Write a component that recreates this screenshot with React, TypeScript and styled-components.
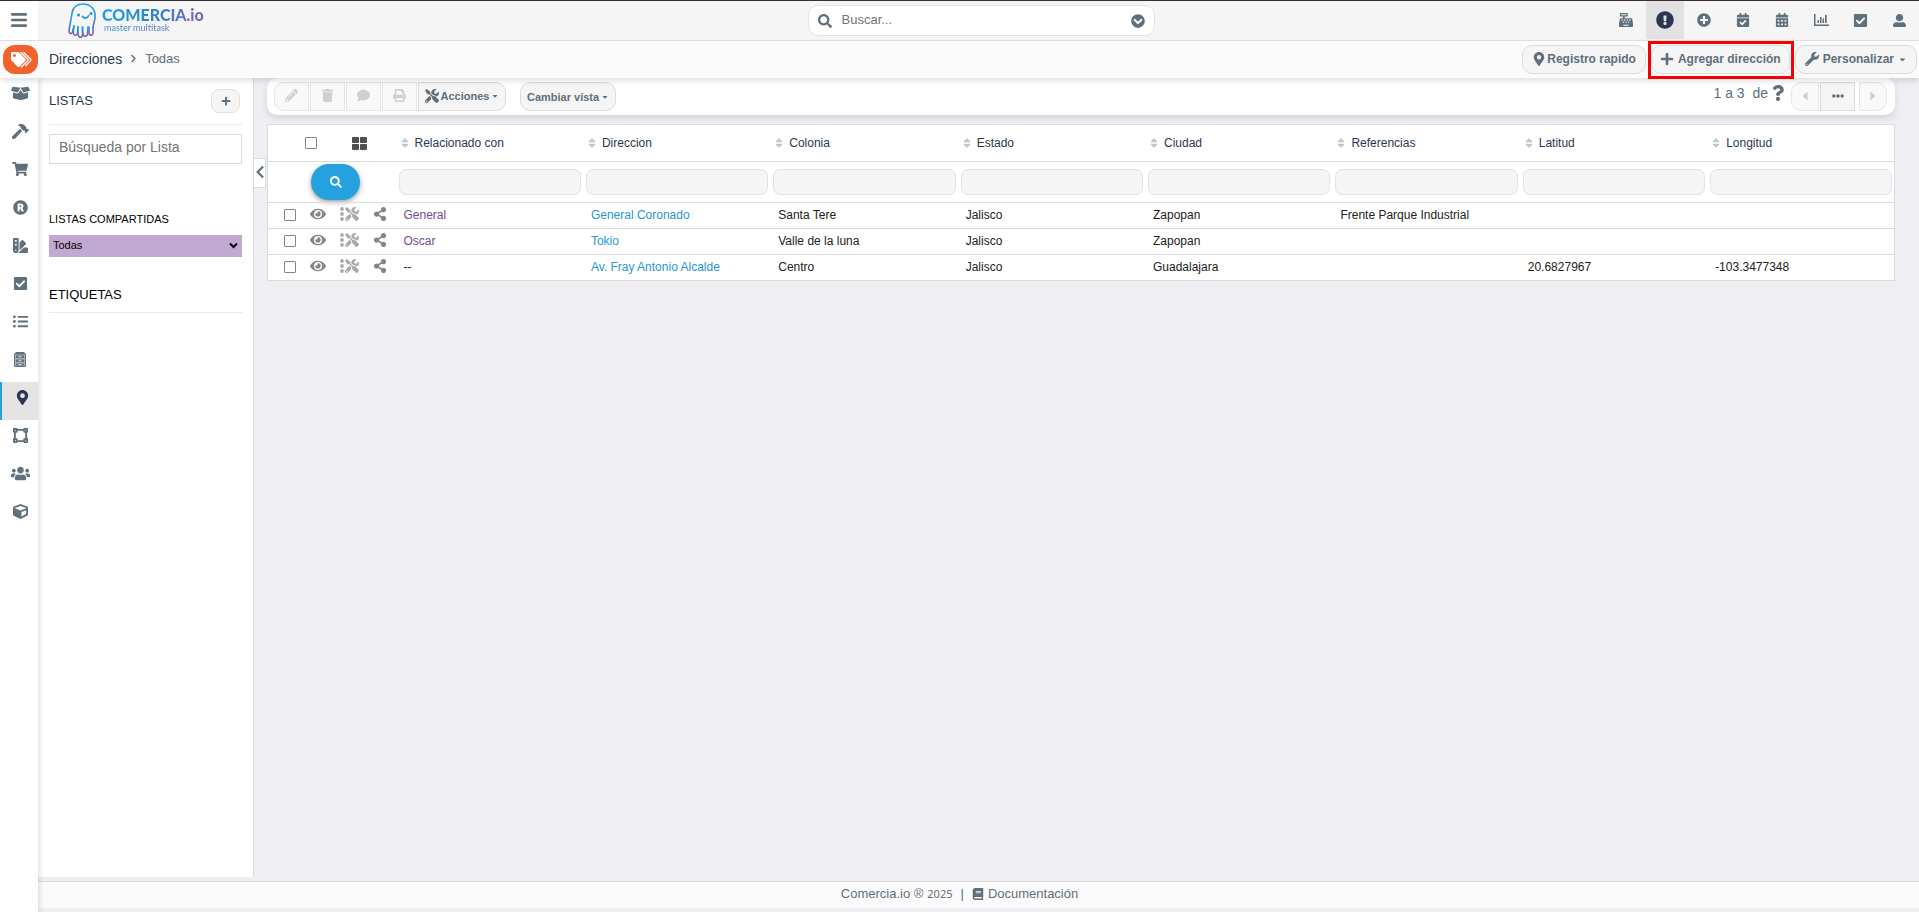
import React from "react";
import styled, { createGlobalStyle, css } from "styled-components";
import {
  FaBars,
  FaBook,
  FaBoxOpen,
  FaCalendarAlt,
  FaCalendarCheck,
  FaCaretDown,
  FaCaretLeft,
  FaCaretRight,
  FaCashRegister,
  FaCheckSquare,
  FaChevronCircleDown,
  FaChevronLeft,
  FaChevronRight,
  FaComment,
  FaCube,
  FaEllipsisH,
  FaExclamationCircle,
  FaEye,
  FaHammer,
  FaListUl,
  FaMapMarkerAlt,
  FaPencilAlt,
  FaPlus,
  FaPlusCircle,
  FaPrint,
  FaQuestion,
  FaRegistered,
  FaSearch,
  FaShareAlt,
  FaShoppingCart,
  FaSort,
  FaSwatchbook,
  FaThLarge,
  FaTools,
  FaTrash,
  FaUserAlt,
  FaUsers,
  FaVectorSquare,
  FaWrench,
} from "react-icons/fa";

const GlobalStyle = createGlobalStyle`
  *, *::before, *::after { box-sizing: border-box; }
  body {
    margin: 0;
    background: #eeeef3;
    color: #212529;
    font-family: "Liberation Sans", Arial, sans-serif;
    font-size: 13px;
    line-height: 16px;
  }
  button, input, select { font-family: inherit; }
  button { padding: 0; cursor: pointer; }
  a { text-decoration: none; color: inherit; }
  svg { flex: none; }
`;

const slate = "#5f6f7b";
const navy = "#2b3750";
const line = "#dcdcdc";

const Page = styled.div`
  display: flex;
  flex-direction: column;
  min-height: 100vh;
`;

/* ---------- top bar ---------- */

const TopBar = styled.header`
  display: flex;
  height: 41px;
  border-top: 1px solid #353036;
  border-bottom: 1px solid #e2e2e2;
  background: #f5f5f5;
`;

const MenuButton = styled.button`
  display: flex;
  align-items: center;
  justify-content: center;
  width: 38px;
  padding-bottom: 2px;
  border: 0;
  background: #fff;
  color: ${slate};
`;

const TopGrid = styled.div`
  flex: 1;
  display: grid;
  grid-template-columns: 1fr minmax(200px, 347px) 1fr;
  padding-left: 5px;
`;

const Brand = styled.a`
  display: flex;
  align-items: center;
  gap: 4px;
  padding-left: 24px;
`;

const BrandWords = styled.span`
  display: flex;
  flex-direction: column;
  padding-bottom: 2px;
`;

const BrandName = styled.span`
  font: 900 16px/16px Lato, sans-serif;
  color: transparent;
  background: linear-gradient(100deg, #1c9fdc 10%, #2d86cc 50%, #7a64b4 95%);
  background-clip: text;
`;

const BrandTag = styled.span`
  padding-left: 2px;
  font: 400 9px/10px Lato, sans-serif;
  color: transparent;
  background: linear-gradient(100deg, #3c8fce, #7a64b4);
  background-clip: text;
`;

const SearchBox = styled.label`
  display: flex;
  align-items: center;
  gap: 10px;
  height: 31px;
  margin-top: 4px;
  padding: 0 9px;
  border: 1px solid #e2e2e2;
  border-radius: 10px;
  background: #fff;
  color: ${slate};
`;

const SearchInput = styled.input`
  flex: 1;
  min-width: 0;
  border: 0;
  outline: 0;
  padding: 0 0 2px;
  background: transparent;
  font-size: 13px;
  &::placeholder { color: #757575; opacity: 1; }
`;

const TopIcons = styled.nav`
  display: flex;
  justify-content: flex-end;
  gap: 1px;
  padding-right: 1px;
`;

const TopIcon = styled.button<{ $active?: boolean }>`
  display: flex;
  align-items: center;
  justify-content: center;
  width: 38px;
  height: 38px;
  border: 0;
  background: ${(p) => (p.$active ? "#e2e2e2" : "transparent")};
  color: ${(p) => (p.$active ? navy : slate)};
`;

/* ---------- breadcrumb bar ---------- */

const CrumbBar = styled.div`
  position: relative;
  z-index: 2;
  display: flex;
  align-items: center;
  height: 37px;
  padding: 0 2px 0 3px;
  background: #fbfbfb;
  box-shadow: 0 3px 6px rgba(0, 0, 0, 0.12);
`;

const TagBadge = styled.a`
  display: flex;
  align-items: center;
  justify-content: center;
  width: 35px;
  height: 29px;
  border-radius: 12px;
  background: #f1622c;
`;

const Crumbs = styled.nav`
  flex: 1;
  display: flex;
  align-items: center;
  gap: 7px;
  padding: 0 0 2px 11px;
  color: ${slate};
`;

const CrumbLink = styled.a`
  font-size: 14px;
  color: ${navy};
`;

const CrumbActions = styled.div`
  display: flex;
  gap: 5px;
  padding-bottom: 1px;
`;

const Highlight = styled.span`
  position: relative;
  display: flex;
  &::after {
    content: "";
    position: absolute;
    inset: -4px -4px -5px -3px;
    border: 3px solid #f80000;
    pointer-events: none;
  }
`;

const Pill = styled.button<{ $pad?: number; $gap?: number; $small?: boolean }>`
  display: flex;
  align-items: center;
  justify-content: center;
  gap: ${(p) => p.$gap ?? 4}px;
  height: 29px;
  padding: 0 ${(p) => p.$pad ?? 11}px;
  border: 1px solid ${line};
  border-radius: 10px;
  background: #f5f5f5;
  color: ${slate};
  font-weight: 700;
  font-size: ${(p) => (p.$small ? 11 : 12)}px;
  white-space: nowrap;
`;

/* ---------- side navigation and lists panel ---------- */

const Body = styled.div`
  flex: 1;
  display: flex;
`;

const SideNav = styled.nav`
  position: relative;
  z-index: 1;
  width: 38px;
  flex: none;
  background: #fff;
  box-shadow: 2px 0 5px rgba(0, 0, 0, 0.12);
`;

const SideLink = styled.a<{ $active?: boolean }>`
  display: flex;
  align-items: center;
  justify-content: center;
  height: 38px;
  padding: 0 0 8px 2px;
  color: ${slate};
  ${(p) =>
    p.$active &&
    css`
      border-left: 2px solid #24a1de;
      padding-left: 5px;
      background: #e4e4e4;
      color: ${navy};
    `}
`;

const Column = styled.div`
  flex: 1;
  min-width: 0;
  display: flex;
  flex-direction: column;
`;

const Content = styled.div`
  flex: 1;
  display: flex;
`;

const ListPanel = styled.aside`
  flex: none;
  display: flex;
  flex-direction: column;
  width: 216px;
  padding: 10px 11px;
  border-right: 1px solid ${line};
  background: #fff;
`;

const PanelHead = styled.div`
  display: flex;
  align-items: center;
  justify-content: space-between;
  height: 37px;
  padding: 0 2px 10px 0;
  border-bottom: 1px solid #e9e9e9;
`;

const PanelTitle = styled.h2<{ $plain?: boolean }>`
  margin: 0;
  font-size: 13px;
  font-weight: 400;
  line-height: 16px;
  color: ${(p) => (p.$plain ? "#000" : navy)};
`;

const AddButton = styled.button`
  display: flex;
  align-items: center;
  justify-content: center;
  width: 29px;
  height: 24px;
  border: 1px solid #e0e0e0;
  border-radius: 8px;
  background: #f5f5f5;
  color: ${slate};
`;

const ListSearch = styled.input`
  height: 30px;
  margin-top: 9px;
  padding: 0 9px 4px;
  border: 1px solid ${line};
  font-size: 14px;
  &::placeholder { color: #757575; opacity: 1; }
`;

const SharedLabel = styled.label`
  margin-top: 47px;
  font-size: 11px;
  color: #000;
`;

const SelectWrap = styled.div`
  display: grid;
  align-items: center;
  margin-top: 8px;
  background: #c1a9d1;
  & > * { grid-area: 1 / 1; }
  & > svg { justify-self: end; margin: 0 4px 2px 0; pointer-events: none; color: #000; }
`;

const SharedSelect = styled.select`
  appearance: none;
  height: 22px;
  padding: 0 4px 2px;
  border: 0;
  background: transparent;
  color: #000;
  font-size: 11px;
`;

const TagsHead = styled.div`
  margin-top: 30px;
  padding-bottom: 9px;
  border-bottom: 1px solid #e9e9e9;
`;

const Gutter = styled.div`
  flex: none;
  width: 13px;
  padding-top: 80px;
`;

const CollapseButton = styled.button`
  display: flex;
  align-items: center;
  justify-content: center;
  width: 12px;
  height: 30px;
  padding-bottom: 2px;
  border: 1px solid ${line};
  border-left: 0;
  background: #fff;
  color: ${slate};
`;

/* ---------- main area ---------- */

const Main = styled.main`
  flex: 1;
  min-width: 0;
  padding-right: 24px;
`;

const Toolbar = styled.div`
  display: flex;
  justify-content: space-between;
  height: 37px;
  padding: 4px 8px 4px 7px;
  border-radius: 10px;
  background: #fff;
  box-shadow: 0 3px 6px rgba(60, 60, 90, 0.16);
`;

const Tools = styled.div`
  display: flex;
  gap: 1px;
`;

const ToolButton = styled.button<{ $end?: "left" | "right"; $faded?: boolean; $width?: number }>`
  display: flex;
  align-items: center;
  justify-content: center;
  gap: 2px;
  width: ${(p) => p.$width ?? 35}px;
  height: 29px;
  padding-bottom: 2px;
  border: 1px solid ${(p) => (p.$faded ? "#e6e6e6" : line)};
  border-radius: ${(p) =>
    p.$end === "left" ? "10px 0 0 10px" : p.$end === "right" ? "0 10px 10px 0" : "0"};
  background: ${(p) => (p.$faded ? "#f9f9f9" : "#f5f5f5")};
  color: ${(p) => (p.$faded ? "#cbd0d4" : slate)};
  font-size: 11px;
  font-weight: 700;
`;

const ViewMenu = styled.div`
  padding-left: 13px;
`;

const Pager = styled.div`
  display: flex;
  gap: 1px;
`;

const PagerText = styled.span`
  display: flex;
  gap: 2px;
  padding: 3px 4px 0 0;
  font-size: 14px;
  color: ${slate};
  white-space: pre;
`;

const NextWrap = styled.span`
  padding-left: 3px;
`;

const Grid = styled.table`
  width: 100%;
  margin-top: 9px;
  table-layout: fixed;
  border-collapse: collapse;
  border: 1px solid ${line};
  background: #fff;
  font-size: 12px;
`;

const ToolsCol = styled.col`
  width: 128px;
`;

const HeadRow = styled.tr`
  height: 37px;
`;

const FilterRow = styled.tr`
  height: 41px;
  border-top: 1px solid ${line};
`;

const DataRow = styled.tr`
  height: 26px;
  border-top: 1px solid ${line};
`;

const HeadCell = styled.th`
  padding: 0 3px;
  font-weight: 400;
  text-align: left;
  color: ${navy};
`;

const HeadTools = styled.div`
  display: flex;
  align-items: center;
  gap: 35px;
  padding-left: 34px;
  color: #505050;
`;

const SortLabel = styled.button`
  display: flex;
  align-items: center;
  gap: 4px;
  border: 0;
  background: none;
  color: inherit;
  font-size: 12px;
  & > svg { color: #c3c6cc; }
`;

const FilterCell = styled.td`
  padding: 0 2px 0 3px;
`;

const FilterInput = styled.input`
  display: block;
  width: 100%;
  height: 26px;
  border: 1px solid #e3e3e3;
  border-radius: 7px;
  background: #f5f5f5;
`;

const SearchButton = styled.button`
  display: flex;
  align-items: center;
  justify-content: center;
  width: 49px;
  height: 36px;
  margin-left: 40px;
  border: 0;
  border-radius: 18px;
  background: #24a1de;
  color: #fff;
  box-shadow: 0 2px 5px rgba(0, 0, 0, 0.4);
`;

const Cell = styled.td`
  padding: 0 8px 1px;
  color: #212121;
`;

const RowTools = styled.div`
  display: flex;
  align-items: center;
  gap: 14px;
  padding-left: 8px;
`;

const RowAction = styled.button`
  display: flex;
  padding-bottom: 2px;
  border: 0;
  background: none;
  color: #868686;
`;

const Tick = styled.input`
  appearance: none;
  width: 12px;
  height: 12px;
  margin: 0;
  border: 1px solid #858585;
  border-radius: 1px;
  background: #fff;
`;

const CellLink = styled.a<{ $visited?: boolean }>`
  color: ${(p) => (p.$visited ? "#734a94" : "#2796d3")};
`;

const Footer = styled.footer`
  display: flex;
  justify-content: center;
  align-items: center;
  gap: 8px;
  height: 27px;
  margin: 4px 0;
  padding: 0 38px 2px 0;
  border-top: 1px solid ${line};
  background: #fbfbfb;
  color: ${slate};
`;

const Year = styled.span`
  font: 11px/16px "Noto Sans", sans-serif;
`;

const FooterPart = styled.span`
  display: flex;
  align-items: center;
  gap: 4px;
  font-size: 13px;
`;

/* ---------- drawings ---------- */

const GhostLogo = () => (
  <svg width="31" height="37" viewBox="0 0 31 37" fill="none" aria-hidden="true">
    <defs>
      <linearGradient id="ghost" x1="0" y1="0" x2="0" y2="1">
        <stop offset="0" stopColor="#1fa6e0" />
        <stop offset="0.55" stopColor="#3c86cb" />
        <stop offset="1" stopColor="#8059ad" />
      </linearGradient>
    </defs>
    <g stroke="url(#ghost)" strokeWidth="1.6" strokeLinecap="round" strokeLinejoin="round">
      <path d="M5 11C6 5 10 2 16 2c8 0 13 6 12 14-.5 4-1.500 6-2 9-.3 3 .3 4 0 6-.5 3-3.500 3-4 0v-6" />
      <path d="M5 11c-1 8-2.500 12-3 18-.2 3 2.500 3.500 3.500 1L7 24" />
      <path d="M7 24c-.5 4-1 6-.5 8 1 2 3.500 1.500 4-.5l.5-7" />
      <path d="M11 25c0 4-.5 7 .5 9 1.500 2 4 1.500 4-1V25" />
      <path d="M15.500 25c0 3 0 6 .8 8 1.200 2 4 1.500 4.200-1 .2-2 0-4 .5-7" />
    </g>
    <circle cx="11.500" cy="13" r="1.500" fill="#2b95d6" />
    <circle cx="24" cy="11.500" r="1.500" fill="#2b95d6" />
    <path d="M15.500 14.500c1.500 2.200 5 2 6-.8" stroke="#2b95d6" strokeWidth="1.800" strokeLinecap="round" />
  </svg>
);

const TagsIcon = () => (
  <svg width="22" height="18" viewBox="0 0 22 18" aria-hidden="true">
    <path
      fill="#fff"
      fillRule="evenodd"
      d="M1.500 1h6.200c.6 0 1 .2 1.400.6l6 6c.7.7.7 1.700 0 2.400l-5.300 5.500c-.7.7-1.700.7-2.400 0L1.600 9.600C1.200 9.200 1 8.700 1 8.200V1.500c0-.3.200-.5.500-.5zM4.500 3a1.500 1.500 0 1 0 0 3 1.500 1.500 0 0 0 0-3z"
    />
    <path
      d="M11 1.500l6.800 6.600c.5.500.5 1 0 1.500L11.500 16M13.800 1.500l6.800 6.600c.4.500.4 1 0 1.500L16 14.500"
      fill="none"
      stroke="#fff"
      strokeWidth="1.300"
      strokeLinecap="round"
    />
  </svg>
);

const CabinetIcon = () => (
  <svg width="12" height="15" viewBox="0 0 12 15" fill="none" aria-hidden="true">
    <path d="M2 0h8l2 2.500H0z" fill="currentColor" />
    <path d="M.5 2h11v12.500H.5z" stroke="currentColor" fill="#aab3ba" />
    <path d="M2 3.500h8v2.500H2zM2 7.500h8V10H2zM2 11.500h8v2H2z" fill="currentColor" />
    <path stroke="#fff" strokeWidth="0.800" d="M4.500 4.700h3M4.500 8.700h3M4.500 12.500h3" />
  </svg>
);

const DottedTools = () => (
  <svg width="19" height="14" viewBox="0 0 19 14" fill="#a9a9a9" aria-hidden="true">
    <circle cx="2" cy="2" r="1.900" />
    <circle cx="2" cy="7" r="1.900" />
    <circle cx="2" cy="12" r="1.900" />
    <FaTools x="5" y="0" size={14} color="#a9a9a9" />
  </svg>
);

/* ---------- data ---------- */

const topIcons = [
  { label: "Caja", icon: <FaCashRegister size={14} /> },
  { label: "Avisos", icon: <FaExclamationCircle size={18} />, active: true },
  { label: "Agregar", icon: <FaPlusCircle size={14} /> },
  { label: "Agenda", icon: <FaCalendarCheck size={14} /> },
  { label: "Calendario", icon: <FaCalendarAlt size={14} /> },
  {
    label: "Reportes",
    icon: (
      <svg width="15" height="12" viewBox="0 0 15 12" fill="currentColor" aria-hidden="true">
        <path d="M0 0h1.500v10.500H15V12H0z" />
        <path d="M3.500 6h1.500v3H3.500zM6 3h1.500v6H6zM8.500 4.500H10v4.500H8.500zM11 1h1.700v8H11z" />
      </svg>
    ),
  },
  { label: "Tareas", icon: <FaCheckSquare size={15} /> },
  { label: "Usuario", icon: <FaUserAlt size={13} /> },
];

const sideLinks = [
  { label: "Productos", icon: <FaBoxOpen size={19} /> },
  { label: "Servicios", icon: <FaHammer size={17} /> },
  { label: "Ventas", icon: <FaShoppingCart size={16} /> },
  { label: "Marcas", icon: <FaRegistered size={15} /> },
  { label: "Variantes", icon: <FaSwatchbook size={15} /> },
  { label: "Tareas", icon: <FaCheckSquare size={15} /> },
  { label: "Listas", icon: <FaListUl size={15} /> },
  { label: "Archivo", icon: <CabinetIcon /> },
  { label: "Direcciones", icon: <FaMapMarkerAlt size={15} />, active: true },
  { label: "Zonas", icon: <FaVectorSquare size={15} /> },
  { label: "Clientes", icon: <FaUsers size={19} /> },
  { label: "Inventario", icon: <FaCube size={15} /> },
];

const columns = [
  "Relacionado con",
  "Direccion",
  "Colonia",
  "Estado",
  "Ciudad",
  "Referencias",
  "Latitud",
  "Longitud",
];

const rows = [
  ["General", "General Coronado", "Santa Tere", "Jalisco", "Zapopan", "Frente Parque Industrial", "", ""],
  ["Oscar", "Tokio", "Valle de la luna", "Jalisco", "Zapopan", "", "", ""],
  ["--", "Av. Fray Antonio Alcalde", "Centro", "Jalisco", "Guadalajara", "", "20.6827967", "-103.3477348"],
];

const CellValue = ({ value, index }: { value: string; index: number }) => {
  if (index > 1 || value === "--") return <>{value}</>;
  return (
    <CellLink href="#" $visited={index === 0}>
      {value}
    </CellLink>
  );
};

export default function App() {
  return (
    <Page>
      <GlobalStyle />
      <TopBar>
        <MenuButton aria-label="Menú">
          <FaBars size={18} />
        </MenuButton>
        <TopGrid>
          <Brand href="#">
            <GhostLogo />
            <BrandWords>
              <BrandName>COMERCIA.io</BrandName>
              <BrandTag>master multitask</BrandTag>
            </BrandWords>
          </Brand>
          <SearchBox>
            <FaSearch size={14} />
            <SearchInput type="text" placeholder="Buscar..." aria-label="Buscar" />
            <FaChevronCircleDown size={14} />
          </SearchBox>
          <TopIcons>
            {topIcons.map((item) => (
              <TopIcon key={item.label} aria-label={item.label} $active={item.active}>
                {item.icon}
              </TopIcon>
            ))}
          </TopIcons>
        </TopGrid>
      </TopBar>

      <CrumbBar>
        <TagBadge href="#" aria-label="Etiquetas">
          <TagsIcon />
        </TagBadge>
        <Crumbs>
          <CrumbLink href="#">Direcciones</CrumbLink>
          <FaChevronRight size={9} />
          <span>Todas</span>
        </Crumbs>
        <CrumbActions>
          <Pill $gap={1} $pad={9}>
            <FaMapMarkerAlt size={14} />
            Registro rapido
          </Pill>
          <Highlight>
            <Pill $gap={4} $pad={8}>
              <FaPlus size={14} />
              Agregar dirección
            </Pill>
          </Highlight>
          <Pill $gap={4} $pad={9}>
            <FaWrench size={14} />
            Personalizar
            <FaCaretDown size={9} />
          </Pill>
        </CrumbActions>
      </CrumbBar>

      <Body>
        <SideNav>
          {sideLinks.map((item) => (
            <SideLink key={item.label} href="#" aria-label={item.label} $active={item.active}>
              {item.icon}
            </SideLink>
          ))}
        </SideNav>

        <Column>
          <Content>
            <ListPanel>
              <PanelHead>
                <PanelTitle>LISTAS</PanelTitle>
                <AddButton aria-label="Agregar lista">
                  <FaPlus size={10} />
                </AddButton>
              </PanelHead>
              <ListSearch type="text" placeholder="Búsqueda por Lista" aria-label="Búsqueda por Lista" />
              <SharedLabel htmlFor="shared-lists">LISTAS COMPARTIDAS</SharedLabel>
              <SelectWrap>
                <SharedSelect id="shared-lists">
                  <option>Todas</option>
                </SharedSelect>
                <svg width="9" height="7" viewBox="0 0 9 7" fill="none" aria-hidden="true">
                  <path d="M1 1.500l3.500 3.500L8 1.500" stroke="currentColor" strokeWidth="2" />
                </svg>
              </SelectWrap>
              <TagsHead>
                <PanelTitle $plain>ETIQUETAS</PanelTitle>
              </TagsHead>
            </ListPanel>

            <Gutter>
              <CollapseButton aria-label="Ocultar panel">
                <FaChevronLeft size={14} />
              </CollapseButton>
            </Gutter>

            <Main>
              <Toolbar>
                <Tools>
                  <ToolButton $end="left" $faded aria-label="Editar">
                    <FaPencilAlt size={13} />
                  </ToolButton>
                  <ToolButton $faded aria-label="Eliminar">
                    <FaTrash size={13} />
                  </ToolButton>
                  <ToolButton $faded aria-label="Comentar">
                    <FaComment size={13} />
                  </ToolButton>
                  <ToolButton $faded aria-label="Imprimir">
                    <FaPrint size={13} />
                  </ToolButton>
                  <ToolButton $end="right" $width={88}>
                    <FaTools size={14} />
                    Acciones
                    <FaCaretDown size={8} />
                  </ToolButton>
                  <ViewMenu>
                    <Pill $small $gap={2} $pad={6}>
                      Cambiar vista
                      <FaCaretDown size={8} />
                    </Pill>
                  </ViewMenu>
                </Tools>
                <Pager>
                  <PagerText>
                    <span>{"1 a 3  de"}</span>
                    <FaQuestion size={16} />
                  </PagerText>
                  <ToolButton $end="left" $faded $width={28} aria-label="Anterior">
                    <FaCaretLeft size={14} />
                  </ToolButton>
                  <ToolButton aria-label="Más páginas">
                    <FaEllipsisH size={12} />
                  </ToolButton>
                  <NextWrap>
                    <ToolButton $end="right" $faded $width={28} aria-label="Siguiente">
                      <FaCaretRight size={14} />
                    </ToolButton>
                  </NextWrap>
                </Pager>
              </Toolbar>

              <Grid>
                <colgroup>
                  <ToolsCol />
                  {columns.map((name) => (
                    <col key={name} />
                  ))}
                </colgroup>
                <thead>
                  <HeadRow>
                    <HeadCell>
                      <HeadTools>
                        <Tick type="checkbox" aria-label="Seleccionar todo" />
                        <FaThLarge size={15} />
                      </HeadTools>
                    </HeadCell>
                    {columns.map((name) => (
                      <HeadCell key={name}>
                        <SortLabel>
                          <FaSort size={12} />
                          {name}
                        </SortLabel>
                      </HeadCell>
                    ))}
                  </HeadRow>
                </thead>
                <tbody>
                  <FilterRow>
                    <FilterCell>
                      <SearchButton aria-label="Buscar">
                        <FaSearch size={12} />
                      </SearchButton>
                    </FilterCell>
                    {columns.map((name) => (
                      <FilterCell key={name}>
                        <FilterInput type="text" aria-label={name} />
                      </FilterCell>
                    ))}
                  </FilterRow>
                  {rows.map((row) => (
                    <DataRow key={row[1]}>
                      <Cell>
                        <RowTools>
                          <Tick type="checkbox" aria-label={row[1]} />
                          <RowAction aria-label="Ver">
                            <FaEye size={16} />
                          </RowAction>
                          <RowAction aria-label="Acciones">
                            <DottedTools />
                          </RowAction>
                          <RowAction aria-label="Compartir">
                            <FaShareAlt size={14} />
                          </RowAction>
                        </RowTools>
                      </Cell>
                      {row.map((value, i) => (
                        <Cell key={columns[i]}>
                          <CellValue value={value} index={i} />
                        </Cell>
                      ))}
                    </DataRow>
                  ))}
                </tbody>
              </Grid>
            </Main>
          </Content>

          <Footer>
            <FooterPart>
              Comercia.io ® <Year>2025</Year>
            </FooterPart>
            <span>|</span>
            <FooterPart as="a" href="#">
              <FaBook size={12} />
              Documentación
            </FooterPart>
          </Footer>
        </Column>
      </Body>
    </Page>
  );
}
